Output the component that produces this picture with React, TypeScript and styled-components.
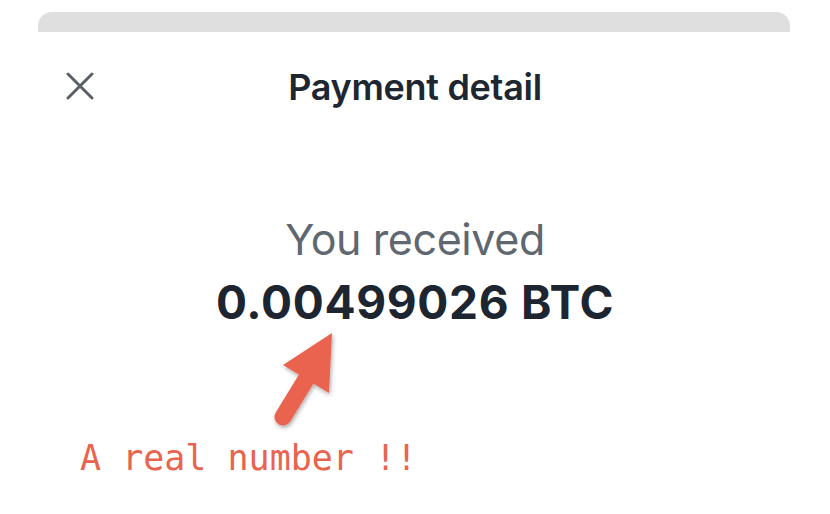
import React from "react";
import styled, { createGlobalStyle } from "styled-components";

const Global = createGlobalStyle`
  html, body { margin: 0; padding: 0; background: #ffffff; }
  body { width: 830px; height: 514px; overflow: hidden; font-family: Inter, "Noto Sans", sans-serif; }
`;

const Page = styled.div`
  width: 830px;
  height: 514px;
  display: flex;
  flex-direction: column;
  background: #fff;
`;

const SheetEdge = styled.div`
  margin: 12px 40px 0 38px;
  height: 20px;
  background: #dfdfdf;
  border-radius: 14px 14px 0 0;
`;

const Header = styled.div`
  position: relative;
  height: 68px;
  margin-top: 21px;
  display: flex;
  align-items: center;
  justify-content: center;
`;

const CloseButton = styled.button`
  position: absolute;
  left: 62px;
  top: 15px;
  width: 36px;
  height: 36px;
  padding: 0;
  border: none;
  background: transparent;
  display: flex;
  align-items: center;
  justify-content: center;
`;

const Title = styled.h1`
  margin: 0;
  font-family: Inter, sans-serif;
  font-weight: 600;
  font-size: 36px;
  letter-spacing: -0.3px;
  color: #1e2631;
`;

const Summary = styled.div`
  margin-top: 92px;
  display: flex;
  flex-direction: column;
  align-items: center;
`;

const Label = styled.div`
  font-family: Inter, sans-serif;
  font-weight: 400;
  font-size: 43px;
  line-height: 52px;
  letter-spacing: -0.4px;
  color: #5f6771;
`;

const Amount = styled.div`
  margin-top: 11px;
  font-family: Inter, sans-serif;
  font-weight: 700;
  font-size: 46px;
  line-height: 52px;
  letter-spacing: 0.7px;
  color: #1c2530;
`;

const Annotation = styled.div`
  display: flex;
  flex-direction: column;
  align-items: flex-start;
`;

const ArrowSvg = styled.svg`
  margin-left: 268px;
  overflow: visible;
`;

const Note = styled.div`
  margin-left: 80px;
  margin-top: 10px;
  font-family: "DejaVu Sans Mono", "Liberation Mono", monospace;
  font-size: 35px;
  line-height: 40px;
  color: #e9644f;
`;

function CloseIcon() {
  return (
    <svg width="28" height="28" viewBox="0 0 28 28">
      <path d="M2 2 L26 26 M26 2 L2 26" stroke="#5b6068" strokeWidth="3" strokeLinecap="round" />
    </svg>
  );
}

function Arrow() {
  return (
    <ArrowSvg width="70" height="100" viewBox="0 0 70 100">
      <defs>
        <filter id="sh" x="-30%" y="-30%" width="160%" height="160%">
          <feDropShadow dx="1" dy="2" stdDeviation="2" floodColor="#000" floodOpacity="0.35" />
        </filter>
      </defs>
      <g filter="url(#sh)" fill="#e9644f">
        <line x1="15" y1="89" x2="45" y2="40" stroke="#e9644f" strokeWidth="17" strokeLinecap="round" />
        <polygon points="64,5 15,37 61,65" />
      </g>
    </ArrowSvg>
  );
}

export default function App() {
  return (
    <Page>
      <Global />
      <SheetEdge />
      <Header>
        <CloseButton aria-label="Close">
          <CloseIcon />
        </CloseButton>
        <Title>Payment detail</Title>
      </Header>
      <Summary>
        <Label>You received</Label>
        <Amount>0.00499026 BTC</Amount>
      </Summary>
      <Annotation>
        <Arrow />
        <Note>A real number !!</Note>
      </Annotation>
    </Page>
  );
}
